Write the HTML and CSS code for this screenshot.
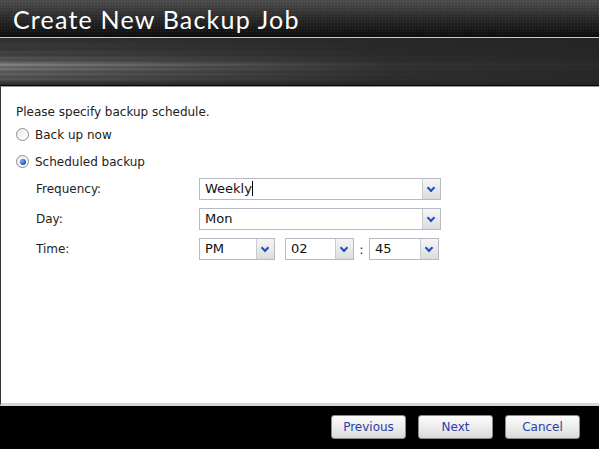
FILE: index.html
```html
<!DOCTYPE html>
<html lang="en">
<head>
    <meta charset="UTF-8">
    <title>Create New Backup Job</title>
    <link rel="stylesheet" href="styles.css">
</head>
<body>
    <div class="wizard">
        <div class="title-bar">
            <h1>Create New Backup Job</h1>
        </div>
        <div class="banner"></div>

        <div class="content">
            <p class="intro">Please specify backup schedule.</p>

            <label class="radio-row">
                <span class="radio"></span>
                Back up now
            </label>
            <label class="radio-row">
                <span class="radio checked"></span>
                Scheduled backup
            </label>

            <div class="schedule">
                <div class="field">
                    <span class="field-label">Frequency:</span>
                    <div class="combo wide">
                        <span class="combo-value">Weekly<span class="caret"></span></span>
                        <span class="combo-arrow"></span>
                    </div>
                </div>
                <div class="field">
                    <span class="field-label">Day:</span>
                    <div class="combo wide">
                        <span class="combo-value">Mon</span>
                        <span class="combo-arrow"></span>
                    </div>
                </div>
                <div class="field">
                    <span class="field-label">Time:</span>
                    <div class="time-group">
                        <div class="combo ampm">
                            <span class="combo-value">PM</span>
                            <span class="combo-arrow"></span>
                        </div>
                        <div class="combo hour">
                            <span class="combo-value">02</span>
                            <span class="combo-arrow"></span>
                        </div>
                        <span class="colon">:</span>
                        <div class="combo minute">
                            <span class="combo-value">45</span>
                            <span class="combo-arrow"></span>
                        </div>
                    </div>
                </div>
            </div>
        </div>

        <div class="footer">
            <button type="button" class="btn">Previous</button>
            <button type="button" class="btn">Next</button>
            <button type="button" class="btn">Cancel</button>
        </div>
    </div>
</body>
</html>
```

FILE: styles.css
```css
html, body {
    margin: 0;
    padding: 0;
    background-color: #000;
}
.wizard {
    width: 599px;
    height: 449px;
    display: flex;
    flex-direction: column;
    font-family: "DejaVu Sans", Verdana, sans-serif;
    font-size: 12px;
    color: #222;
}
.title-bar {
    height: 37px;
    border-bottom: 1px solid #c9d0cc;
    background-color: #111;
    background-image:
        radial-gradient(rgba(255, 255, 255, 0.08) 1px, transparent 1px),
        linear-gradient(to bottom, #4d4d4d 0%, #2c2c2c 45%, #0c0c0c 100%);
    background-size: 3px 3px, 100% 100%;
}
h1 {
    margin: 0;
    padding: 5px 0 0 13px;
    font-family: "Lato", "Open Sans", sans-serif;
    font-weight: 400;
    font-size: 25px;
    letter-spacing: 1.2px;
    color: #fff;
    line-height: 28px;
}
.banner {
    height: 47px;
    border-bottom: 1px solid #050505;
    background-color: #2b2b2b;
    background-image:
        linear-gradient(to right, rgba(40, 40, 40, 0) 0%, rgba(40, 40, 40, 0.5) 35%, rgba(38, 38, 38, 0.85) 65%, rgba(36, 36, 36, 0.92) 100%),
        linear-gradient(to bottom,
            #2e2e2e 0px, #333 4px, #3a3a3a 8px, #343434 11px, #444 14px,
            #3c3c3c 17px, #555 20px, #4a4a4a 22px, #6a6a6a 25px, #8a8a8a 27px,
            #5c5c5c 29px, #777 31px, #505050 34px, #666 36px, #4a4a4a 39px,
            #595959 41px, #3a3a3a 44px, #2a2a2a 47px);
}
.content {
    flex: 1;
    background-color: #fff;
    border-top: 1px solid #9a9a9a;
    border-left: 1px solid #333;
    border-bottom: 3px solid #d6d6d6;
    padding: 18px 0 0 15px;
}
.intro {
    margin: 0 0 1px 0;
    line-height: 15px;
}
.radio-row {
    display: flex;
    align-items: center;
    gap: 6px;
    height: 27px;
}
.radio {
    width: 11px;
    height: 11px;
    border: 1px solid #8d8d8d;
    border-radius: 50%;
    background: linear-gradient(135deg, #ececec, #fff);
    display: flex;
    align-items: center;
    justify-content: center;
}
.radio.checked::after {
    content: "";
    width: 6px;
    height: 6px;
    border-radius: 50%;
    background: radial-gradient(circle at 35% 35%, #7fb0f0, #1a4fb8 70%);
}
.schedule {
    display: flex;
    flex-direction: column;
    gap: 8px;
    padding: 3px 0 0 20px;
}
.field {
    display: flex;
    align-items: center;
    height: 22px;
}
.field-label {
    width: 163px;
}
.combo {
    display: flex;
    height: 20px;
    border: 1px solid #b5bac4;
    background-color: #fff;
}
.combo.wide {
    width: 240px;
}
.combo.ampm {
    width: 74px;
}
.combo.hour {
    width: 67px;
    margin-left: 10px;
}
.combo.minute {
    width: 68px;
}
.combo-value {
    flex: 1;
    padding-left: 5px;
    line-height: 20px;
    font-size: 13px;
    color: #111;
}
.caret {
    display: inline-block;
    width: 1px;
    height: 15px;
    vertical-align: -3px;
    background-color: #000;
}
.combo-arrow {
    width: 17px;
    border-left: 1px solid #c8ccd4;
    background: linear-gradient(to bottom, #f6f6f6, #dcdcdc);
    position: relative;
}
.combo-arrow::after {
    content: "";
    position: absolute;
    left: 5px;
    top: 6px;
    width: 4px;
    height: 4px;
    border-right: 2px solid #1f4fc4;
    border-bottom: 2px solid #1f4fc4;
    transform: rotate(45deg);
}
.time-group {
    display: flex;
    align-items: center;
}
.colon {
    width: 15px;
    text-align: center;
    font-size: 13px;
}
.footer {
    height: 43px;
    background-color: #000;
    display: flex;
    justify-content: flex-end;
    align-items: flex-start;
    gap: 12px;
    padding: 9px 19px 0 0;
    box-sizing: border-box;
}
.btn {
    width: 75px;
    height: 24px;
    border: 1px solid #8a8a8a;
    border-radius: 3px;
    background: linear-gradient(to bottom, #fbfbfb 0%, #ededed 50%, #d9d9d9 100%);
    color: #2a3fa8;
    font-family: "DejaVu Sans", Verdana, sans-serif;
    font-size: 12px;
    cursor: pointer;
    padding: 0;
}
```
